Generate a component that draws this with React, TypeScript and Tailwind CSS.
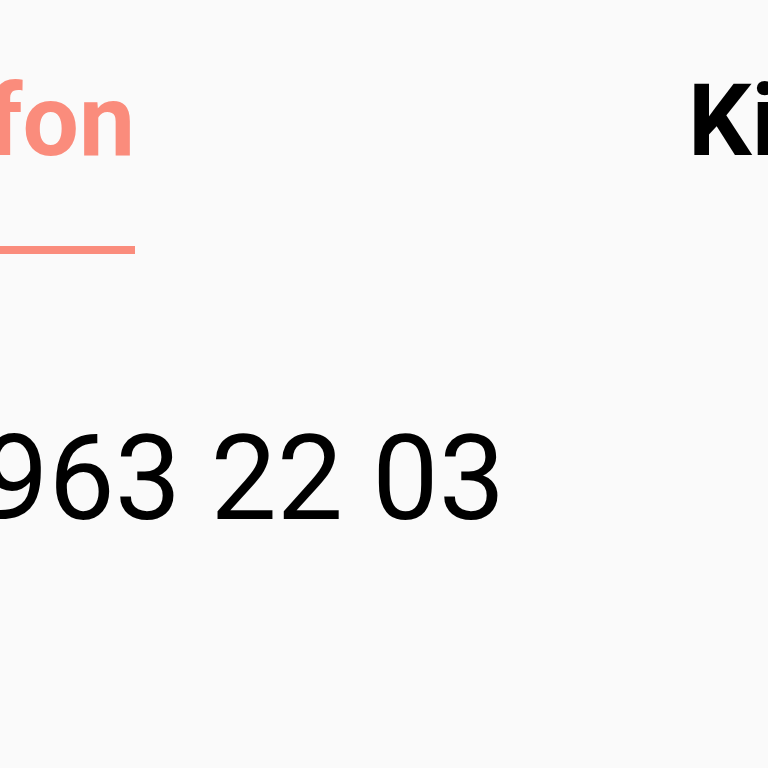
export default function App() {
  return (
    <div className="w-[768px] h-[768px] overflow-hidden bg-[#fafafa] font-['Roboto',sans-serif]">
      <div className="pt-[71px] flex items-start">
        <div className="w-[135px] shrink-0 flex flex-col">
          <div className="flex justify-end whitespace-nowrap text-[100px] leading-none font-bold text-[#fa8c7c]">
            Telefon
          </div>
          <div className="mt-[75px] h-[8px] w-[135px] bg-[#fa8c7c]" />
        </div>
        <div className="ml-[553px] whitespace-nowrap text-[100px] leading-none font-bold text-black">
          Kişi
        </div>
      </div>
      <div className="mt-[166px] w-[505px] flex justify-end whitespace-nowrap text-[118px] leading-none font-normal text-black">
        0212 963 22 03
      </div>
    </div>
  );
}
